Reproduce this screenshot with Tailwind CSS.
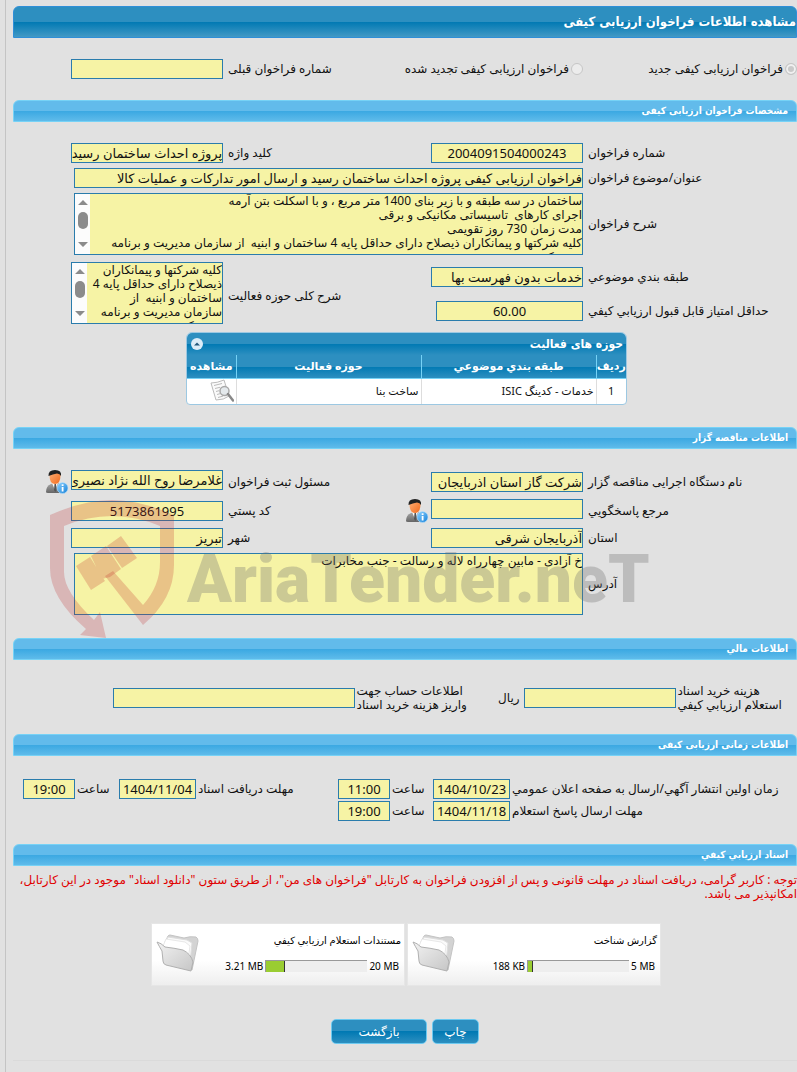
<!DOCTYPE html>
<html lang="fa" dir="rtl">
<head>
<meta charset="utf-8">
<title>مشاهده اطلاعات فراخوان ارزیابی کیفی</title>
<script src="https://cdn.jsdelivr.net/npm/@tailwindcss/browser@4"></script>
</head>
<body class="bg-[#e1e1e1] font-['Noto_Sans','DejaVu_Sans',sans-serif] text-[12px] leading-[14px] text-[#111]">
<svg class="absolute size-0" aria-hidden="true">
  <defs>
    <linearGradient id="skin" x1="0" y1="0" x2="1" y2="1"><stop offset="0" stop-color="#ffb37a"/><stop offset="1" stop-color="#f26a1b"/></linearGradient>
    <linearGradient id="suit" x1="0" y1="0" x2="0" y2="1"><stop offset="0" stop-color="#a9a9a9"/><stop offset="1" stop-color="#666"/></linearGradient>
    <linearGradient id="badge" x1="0" y1="0" x2="1" y2="1"><stop offset="0" stop-color="#8fd2ff"/><stop offset="1" stop-color="#1480d8"/></linearGradient>
    <linearGradient id="fold" x1="0" y1="0" x2="1" y2="1"><stop offset="0" stop-color="#f2f2f2"/><stop offset="1" stop-color="#c6c6c6"/></linearGradient>
  </defs>
  <symbol id="person" viewBox="0 0 24 24">
    <path d="M1 22q0-6 5-8l3-1h4l4 2 2 8H3q-2 0-2-1z" fill="url(#suit)"/>
    <path d="M7 13l3 7 3-7z" fill="#fff"/><path d="M9.500 14h1.500l.6 6-1.300 2-1.300-2z" fill="#555"/>
    <path d="M4.500 5q0-4 5.500-4t5.500 4q0 9-5.500 9T4.500 5z" fill="url(#skin)"/>
    <path d="M3.500 6Q3 0 10 0q7 0 6 6-1-2.500-4-2.500-4 .5-8.500 2.500z" fill="#222"/>
    <circle cx="17.500" cy="18" r="5.500" fill="url(#badge)" stroke="#b9e0fb" stroke-width=".6"/>
    <rect x="16.700" y="17" width="1.800" height="4.500" fill="#fff"/><rect x="16.700" y="14.300" width="1.800" height="1.700" fill="#fff"/>
  </symbol>
  <symbol id="folder" viewBox="0 0 44 38">
    <path d="M9 8l3-6q1-1 2-1l14 3q6-2 12-1 2 1 2 4l-6 29z" fill="#d3d3d3" stroke="#c4c4c4"/>
    <path d="M9 9l3-6 19 3 5 3-2 20z" fill="#fafafa" stroke="#ddd"/>
    <path d="M7 12l3-7 19 3 5 4-2 14z" fill="#fff" stroke="#e8e8e8"/>
    <path d="M1 8q4 1 8 5 9 1 18 3 8 4 10 12l-2 9-25-6q-3-1-3-4L6 17q-3-5-5-9z" fill="url(#fold)" stroke="#b0b0b0"/>
  </symbol>
  <symbol id="preview" viewBox="0 0 24 24">
    <path d="M1 4q6 0 13-3l5 16q-5 4-13 4z" fill="#fafafa" stroke="#bbb"/>
    <path d="M4 6.500l8-2M5 9.500l5-1.200M6 12.500l3-.8M7 15.500l3-.8M8 18.500l5-1.400" stroke="#bbb" fill="none"/>
    <circle cx="14.500" cy="12" r="4.500" fill="#e4e9ec" stroke="#a9a9a9" stroke-width="1.500"/>
    <path d="M18 15l5 6.500" stroke="#888" stroke-width="2.500" stroke-linecap="round"/>
  </symbol>
  <symbol id="scroll" viewBox="0 0 15 60">
    <path d="M3 11h10L8 6zM3 48h10l-5 5z" fill="#8b8b8b"/><rect x="3" y="18" width="10" height="17" rx="5" fill="#8b8b8b"/>
  </symbol>
</svg>

<main class="relative ml-[5px] border-l border-[#c4c4c4] pl-[7px] pt-[6px] pb-3">
  <h1 class="flex h-8 items-center rounded-t-md border border-[#2f8fd8] bg-[linear-gradient(#2d8fc0_0_50%,#0079b3_50%,#4399c5)] font-['DejaVu_Sans_Condensed','DejaVu_Sans',sans-serif] text-[13px] font-bold text-white">مشاهده اطلاعات فراخوان ارزیابی کیفی</h1>

  <div class="mt-[21px] grid grid-cols-[209fr_180fr_170fr_210fr] items-center gap-x-[5px]">
    <label class="flex items-center gap-[2px] whitespace-nowrap"><input type="radio" name="kind" checked disabled class="size-3 shrink-0 appearance-none rounded-full border border-[#c6c6c6] bg-[#f3f3f3] checked:bg-[#c9c9c9] checked:shadow-[inset_0_0_0_2px_#f0f0f0]">فراخوان ارزیابی کیفی جدید</label>
    <label class="flex items-center gap-[2px] whitespace-nowrap"><input type="radio" name="kind" disabled class="size-3 shrink-0 appearance-none rounded-full border border-[#c6c6c6] bg-[#ececec]">فراخوان ارزیابی کیفی تجدید شده</label>
    <label for="prev" class="text-end">شماره فراخوان قبلی</label>
    <input id="prev" readonly class="h-5 w-[152px] border border-[#2a7cac] bg-[#f6f3a5]">
  </div>

  <h2 class="mt-[21px] flex h-[22px] items-center rounded-t-md border border-[#76d2f6] bg-[linear-gradient(#62bbeb_0_50%,#3aa8e2_50%,#5fbbea)] px-2 font-['DejaVu_Sans_Condensed','DejaVu_Sans',sans-serif] text-[10px] font-bold text-white">مشخصات فراخوان ارزیابی کیفی</h2>

  <div class="mt-[21px] grid grid-cols-[209fr_180fr_170fr_210fr] items-center gap-x-[5px] gap-y-[5px]">
    <label for="num" class="text-end">شماره فراخوان</label>
    <input id="num" readonly value="2004091504000243" class="h-5 w-[152px] border border-[#2a7cac] bg-[#f6f3a5] text-center text-[13px]">
    <label for="key" class="text-end">کلید واژه</label>
    <input id="key" readonly value="پروژه احداث ساختمان رسید" class="h-5 w-[152px] border border-[#2a7cac] bg-[#f6f3a5] text-[13px]">

    <label for="title" class="text-end">عنوان/موضوع فراخوان</label>
    <div class="col-span-3 flex pl-[61px]"><input id="title" readonly value="فراخوان ارزیابی کیفی پروژه احداث ساختمان رسید و ارسال امور تدارکات و عملیات کالا" class="h-5 w-full border border-[#2a7cac] bg-[#f6f3a5] text-[13px]"></div>

    <label for="desc" class="text-end">شرح فراخوان</label>
    <div class="col-span-3 pl-[61px]">
      <div class="flex h-[62px] border border-[#2a7cac] bg-[#f6f3a5]">
        <textarea id="desc" readonly class="h-full min-w-0 flex-1 resize-none overflow-hidden">ساختمان در سه طبقه و با زیر بنای 1400 متر مربع ، و با اسکلت بتن آرمه
اجرای کارهای  تاسیساتی مکانیکی و برقی
مدت زمان 730 روز تقویمی
کلیه شرکتها و پیمانکاران ذیصلاح دارای حداقل پایه 4 ساختمان و ابنیه  از سازمان مدیریت و برنامه
ریزی کشور</textarea>
        <svg class="h-[60px] w-[15px] shrink-0 bg-[#fcfcfc]"><use href="#scroll"/></svg>
      </div>
    </div>
  </div>

  <div class="mt-[7px] grid grid-cols-[209fr_180fr_170fr_210fr] grid-rows-[30px_38px] items-center gap-x-[5px]">
    <label for="cat" class="text-end">طبقه بندي موضوعي</label>
    <input id="cat" readonly value="خدمات بدون فهرست بها" class="h-5 w-[152px] border border-[#2a7cac] bg-[#f6f3a5] text-[13px]">
    <label for="scope" class="row-span-2 text-end">شرح کلی حوزه فعالیت</label>
    <div class="row-span-2 flex h-[62px] w-[152px] self-start border border-[#2a7cac] bg-[#f6f3a5]">
      <textarea id="scope" readonly class="h-full min-w-0 flex-1 resize-none overflow-hidden">کلیه شرکتها و پیمانکاران
ذیصلاح دارای حداقل پایه 4
ساختمان و ابنیه  از
سازمان مدیریت و برنامه
ریزی کشور</textarea>
      <svg class="h-[60px] w-[15px] shrink-0 bg-[#fcfcfc]"><use href="#scroll"/></svg>
    </div>
    <label for="score" class="text-end whitespace-nowrap">حداقل امتياز قابل قبول ارزيابي كيفي</label>
    <input id="score" readonly value="60.00" class="h-5 w-[147px] border border-[#2a7cac] bg-[#f6f3a5] text-center text-[13px]">
  </div>

  <section class="mr-[170px] mt-[2px] w-[441px] overflow-hidden rounded-t-md rounded-b-sm border border-[#9cc8e2] bg-white">
    <div class="flex h-[22px] items-center justify-between bg-[linear-gradient(#2d8fc0_0_50%,#0079b3_50%,#2d8fc0)] pr-[3px] pl-1 font-['DejaVu_Sans_Condensed','DejaVu_Sans',sans-serif] text-[12px] font-bold text-white">
      <h3>حوزه های فعالیت</h3>
      <button type="button" aria-label="بستن" class="flex size-3 items-center justify-center rounded-full bg-[#dcecf8]"><svg class="size-3" viewBox="0 0 12 12"><path d="M3 7.500h6L6 4.500z" fill="#23587c"/></svg></button>
    </div>
    <table class="w-full table-fixed border-collapse text-[11px]">
      <colgroup><col class="w-[30px]"><col class="w-[175px]"><col class="w-[185px]"><col></colgroup>
      <thead>
        <tr class="h-[23px] bg-[linear-gradient(#2d8fc0_0_50%,#0079b3_50%,#2d8fc0)] text-[11px] text-white">
          <th scope="col" class="border-b border-l border-[#76d2f6]">ردیف</th>
          <th scope="col" class="border-b border-l border-[#76d2f6]">طبقه بندي موضوعي</th>
          <th scope="col" class="border-b border-l border-[#76d2f6]">حوزه فعالیت</th>
          <th scope="col" class="border-b border-[#76d2f6]">مشاهده</th>
        </tr>
      </thead>
      <tbody>
        <tr class="h-[26px]">
          <td class="border-l border-[#ddd] text-center">1</td>
          <td class="border-l border-[#ddd] px-[2px]">خدمات - کدینگ ISIC</td>
          <td class="border-l border-[#ddd] px-[2px]">ساخت بنا</td>
          <td class="px-[2px]"><button type="button" aria-label="مشاهده" class="block"><svg class="size-6"><use href="#preview"/></svg></button></td>
        </tr>
      </tbody>
    </table>
  </section>

  <h2 class="mt-[22px] flex h-[22px] items-center rounded-t-md border border-[#76d2f6] bg-[linear-gradient(#62bbeb_0_50%,#3aa8e2_50%,#5fbbea)] px-2 font-['DejaVu_Sans_Condensed','DejaVu_Sans',sans-serif] text-[10px] font-bold text-white">اطلاعات مناقصه گزار</h2>

  <div class="relative mt-[21px]">
    <div class="grid grid-cols-[209fr_180fr_170fr_210fr] items-center gap-x-[5px] gap-y-[5px]">
      <label for="org" class="text-end">نام دستگاه اجرایی مناقصه گزار</label>
      <input id="org" readonly value="شرکت گاز استان اذربایجان" class="h-5 w-[152px] border border-[#2a7cac] bg-[#f6f3a5] text-[13px]">
      <label for="resp" class="text-end">مسئول ثبت فراخوان</label>
      <div class="flex gap-[2px]">
        <input id="resp" readonly value="غلامرضا روح الله نژاد نصیری" class="h-5 w-[152px] border border-[#2a7cac] bg-[#f6f3a5] text-[13px]">
        <button type="button" aria-label="اطلاعات مسئول"><svg class="size-6"><use href="#person"/></svg></button>
      </div>

      <label for="ref" class="text-end">مرجع پاسخگويي</label>
      <div class="flex gap-[2px]">
        <input id="ref" readonly class="h-5 w-[152px] border border-[#2a7cac] bg-[#f6f3a5]">
        <button type="button" aria-label="اطلاعات مرجع"><svg class="size-6"><use href="#person"/></svg></button>
      </div>
      <label for="zip" class="text-end">كد پستي</label>
      <input id="zip" readonly value="5173861995" class="h-5 w-[152px] border border-[#2a7cac] bg-[#f6f3a5] text-center text-[13px]">

      <label for="prov" class="text-end">استان</label>
      <input id="prov" readonly value="آذربایجان شرقی" class="h-5 w-[152px] border border-[#2a7cac] bg-[#f6f3a5] text-[13px]">
      <label for="city" class="text-end">شهر</label>
      <input id="city" readonly value="تبریز" class="h-5 w-[152px] border border-[#2a7cac] bg-[#f6f3a5] text-[13px]">

      <label for="addr" class="text-end">آدرس</label>
      <div class="col-span-3 flex pl-[61px]"><textarea id="addr" readonly class="h-[62px] w-full resize-none border border-[#2a7cac] bg-[#f6f3a5]">خ آزادی - مابین چهارراه لاله و رسالت - جنب مخابرات</textarea></div>
    </div>
    <svg class="pointer-events-none absolute top-[30px] left-[35px] h-[140px] w-[610px] [direction:ltr]" viewBox="48 500 610 140" aria-hidden="true">
      <g fill="#c02828" fill-opacity=".23">
        <path d="M50 515Q84 500 112 500t62 15v50q0 34-31 60l-38-49 8-5 30 34q17-19 17-43v-36q-48-20-96 0v46q0 20 30 48l6-8 6 26-26-3 6-6Q50 598 50 568z"/>
        <path d="M76 566l14-9 15 24-14 9zM91 556l15-10 15 23-11 8-8 2zM107 546l14-10 16 22-15 10z"/>
      </g>
      <text x="187" y="602" font-size="66" font-weight="900" font-family="Roboto, sans-serif" fill="#6f6f6f" fill-opacity=".32">AriaTender.neT</text>
    </svg>
  </div>

  <h2 class="mt-[23px] flex h-[22px] items-center rounded-t-md border border-[#76d2f6] bg-[linear-gradient(#62bbeb_0_50%,#3aa8e2_50%,#5fbbea)] px-2 font-['DejaVu_Sans_Condensed','DejaVu_Sans',sans-serif] text-[10px] font-bold text-white">اطلاعات مالي</h2>

  <div class="mt-6 grid grid-cols-[120fr_175fr_140fr_343fr] items-center gap-x-[2px]">
    <label for="cost" class="text-end">هزینه خرید اسناد<br>استعلام ارزيابي كيفي</label>
    <div class="flex items-center gap-1"><input id="cost" readonly class="h-5 w-[152px] border border-[#2a7cac] bg-[#f6f3a5]"><span>ریال</span></div>
    <label for="acct" class="text-end">اطلاعات حساب جهت<br>واریز هزینه خرید اسناد</label>
    <input id="acct" readonly class="h-5 w-[242px] border border-[#2a7cac] bg-[#f6f3a5]">
  </div>

  <h2 class="mt-[22px] flex h-[22px] items-center rounded-t-md border border-[#76d2f6] bg-[linear-gradient(#62bbeb_0_50%,#3aa8e2_50%,#5fbbea)] px-2 font-['DejaVu_Sans_Condensed','DejaVu_Sans',sans-serif] text-[10px] font-bold text-white">اطلاعات زمانی ارزیابی کیفی</h2>

  <div class="mt-[23px] grid grid-cols-[285fr_77fr_39fr_52fr_138fr_77fr_40fr_62fr] items-center gap-x-[2px] gap-y-[2px]">
    <label for="d1" class="text-end">زمان اولین انتشار آگهي/ارسال به صفحه اعلان عمومي</label>
    <input id="d1" readonly value="1404/10/23" class="h-5 w-[77px] border border-[#2a7cac] bg-[#f6f3a5] text-center text-[13px]">
    <label for="t1" class="text-end">ساعت</label>
    <input id="t1" readonly value="11:00" class="h-5 w-[52px] border border-[#2a7cac] bg-[#f6f3a5] text-center text-[13px]">
    <label for="d2" class="text-end">مهلت دریافت اسناد</label>
    <input id="d2" readonly value="1404/11/04" class="h-5 w-[77px] border border-[#2a7cac] bg-[#f6f3a5] text-center text-[13px]">
    <label for="t2" class="text-end">ساعت</label>
    <input id="t2" readonly value="19:00" class="h-5 w-[52px] border border-[#2a7cac] bg-[#f6f3a5] text-center text-[13px]">
    <label for="d3" class="text-end">مهلت ارسال پاسخ استعلام</label>
    <input id="d3" readonly value="1404/11/18" class="h-5 w-[77px] border border-[#2a7cac] bg-[#f6f3a5] text-center text-[13px]">
    <label for="t3" class="text-end">ساعت</label>
    <input id="t3" readonly value="19:00" class="h-5 w-[52px] border border-[#2a7cac] bg-[#f6f3a5] text-center text-[13px]">
  </div>

  <h2 class="mt-[23px] flex h-[22px] items-center rounded-t-md border border-[#76d2f6] bg-[linear-gradient(#62bbeb_0_50%,#3aa8e2_50%,#5fbbea)] px-2 font-['DejaVu_Sans_Condensed','DejaVu_Sans',sans-serif] text-[10px] font-bold text-white">اسناد ارزيابي كيفي</h2>
  <p class="mt-[7px] text-[#e00000]">توجه : کاربر گرامی، دریافت اسناد در مهلت قانونی و پس از افزودن فراخوان به کارتابل "فراخوان های من"، از طریق ستون "دانلود اسناد" موجود در این کارتابل، امکانپذیر می باشد.</p>

  <div class="mt-[22px] mr-[136px] flex gap-[2px] text-[10px] text-black">
    <article class="flex h-[63px] w-[254px] items-center justify-between border border-[#e6e6e6] bg-[linear-gradient(#fff_60%,#eee)] pr-[3px] pb-[3px] pl-1">
      <div class="flex flex-col gap-3">
        <h3>گزارش شناخت</h3>
        <div class="flex items-center gap-[2px] pr-[2px]"><span dir="ltr">5 MB</span>
          <div class="flex h-3 w-[102px] justify-end border-t border-l border-[#999] bg-[#eee]"><div class="border-r border-[#333] bg-[#9acd32]" style="width:5%"></div></div>
          <span dir="ltr">188 KB</span></div>
      </div>
      <svg class="h-[38px] w-11"><use href="#folder"/></svg>
    </article>
    <article class="flex h-[63px] w-[254px] items-center justify-between border border-[#e6e6e6] bg-[linear-gradient(#fff_60%,#eee)] pr-[3px] pb-[3px] pl-1">
      <div class="flex flex-col gap-3">
        <h3>مستندات استعلام ارزیابي کیفي</h3>
        <div class="flex items-center gap-[2px] pr-[2px]"><span dir="ltr">20 MB</span>
          <div class="flex h-3 w-[102px] justify-end border-t border-l border-[#999] bg-[#eee]"><div class="border-r border-[#333] bg-[#9acd32]" style="width:18%"></div></div>
          <span dir="ltr">3.21 MB</span></div>
      </div>
      <svg class="h-[38px] w-11"><use href="#folder"/></svg>
    </article>
  </div>

  <div class="mt-[33px] flex justify-center gap-[5px] text-white">
    <button type="button" class="h-[25px] w-[47px] rounded-[5px] border border-[#6cc9f0] bg-[linear-gradient(#2d8fc0_0_50%,#0079b3_50%,#2d8fc0)]">چاپ</button>
    <button type="button" class="h-[25px] w-24 rounded-[5px] border border-[#6cc9f0] bg-[linear-gradient(#2d8fc0_0_50%,#0079b3_50%,#2d8fc0)]">بازگشت</button>
  </div>
  <div class="mt-4 border-b border-[#dadada]"></div>
</main>
</body>
</html>
